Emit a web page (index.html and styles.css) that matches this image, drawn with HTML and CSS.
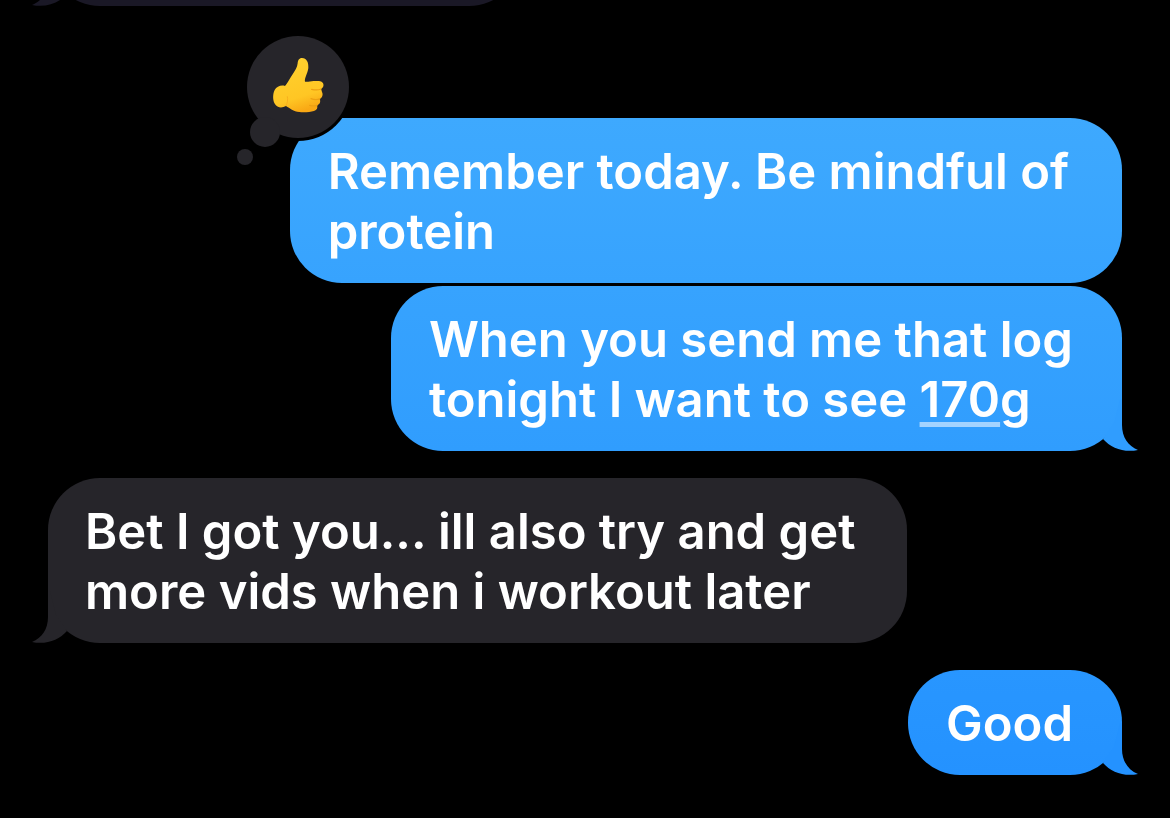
FILE: index.html
```html
<!DOCTYPE html>
<html lang="en">
<head>
<meta charset="utf-8">
<meta name="viewport" content="width=device-width, initial-scale=1">
<title>Messages</title>
<link rel="stylesheet" href="styles.css">
</head>
<body>
<main class="thread">
  <div class="bubble received earlier" aria-hidden="true">
    <svg class="tail" viewBox="0 0 46 52"><path d="M30 0V26C30 38 36 47 46 51C32 54 19 49 11 40L22 24L28 0Z"/></svg>
  </div>
  <div class="group sent-group">
    <div class="bubble sent first">
      <svg class="reaction" viewBox="0 0 120 132" role="img" aria-label="Thumbs up reaction">
        <defs>
          <linearGradient id="skin" x1="0.2" y1="0" x2="0.5" y2="1">
            <stop offset="0" stop-color="#ffd22f"/>
            <stop offset="0.75" stop-color="#ffc624"/>
            <stop offset="1" stop-color="#f9a814"/>
          </linearGradient>
        </defs>
        <circle class="halo" cx="62" cy="53" r="54"/>
        <g class="cloud">
          <circle cx="62" cy="53" r="51"/>
          <circle cx="29" cy="98" r="15"/>
          <circle cx="9" cy="123" r="8"/>
        </g>
        <g transform="translate(26 16) scale(.3333)">
          <path fill="url(#skin)" d="M120 24C111 24 108 31 107 40C106 52 99 62 91 74C84 85 77 98 69 108C58 104 44 109 38 120C31 134 32 155 41 165C48 174 61 174 72 168C84 175 94 185 112 186C127 188 144 186 156 183C165 180 168 174 165 166C173 163 177 156 173 147C181 143 184 134 180 126C179 122 178 119 177 117C184 113 187 104 182 98C177 92 168 93 158 93C147 92 138 97 129 95C127 85 137 70 139 54C140 37 134 24 120 24Z"/>
          <g fill="none" stroke="#eda012" stroke-width="4" stroke-linecap="round">
            <path d="M177 117C168 121 158 120 149 118"/>
            <path d="M173 147C165 150 155 149 147 146"/>
            <path d="M165 166C157 169 150 168 143 166"/>
          </g>
          <path d="M72 167C77 158 78 148 76 140" fill="none" stroke="#f7b01e" stroke-width="3" stroke-linecap="round"/>
        </g>
      </svg>
      <p class="text">Remember today. Be mindful of<br>protein</p>
    </div>
    <div class="bubble sent second">
      <p class="text">When you send me that log<br>tonight I want to see <a class="detected" href="#quantity">170</a>g</p>
      <svg class="tail" viewBox="0 0 46 52" aria-hidden="true"><path d="M30 0V26C30 38 36 47 46 51C32 54 19 49 11 40L22 24L28 0Z"/></svg>
    </div>
  </div>
  <div class="bubble received reply">
    <p class="text">Bet I got you... ill also try and get<br>more vids when i workout later</p>
    <svg class="tail" viewBox="0 0 46 52" aria-hidden="true"><path d="M30 0V26C30 38 36 47 46 51C32 54 19 49 11 40L22 24L28 0Z"/></svg>
  </div>
  <div class="bubble sent last">
    <p class="text">Good</p>
    <svg class="tail" viewBox="0 0 46 52" aria-hidden="true"><path d="M30 0V26C30 38 36 47 46 51C32 54 19 49 11 40L22 24L28 0Z"/></svg>
  </div>
</main>
</body>
</html>
```
FILE: styles.css
```css
* {
  box-sizing: border-box;
}

body {
  margin: 0;
  background: #000;
  color: #fff;
  font-family: Inter, "Liberation Sans", sans-serif;
}

.thread {
  display: flex;
  flex-direction: column;
  gap: 27px;
  min-height: 100vh;
  padding: 0 48px;
  overflow: hidden;
}

.group {
  display: flex;
  flex-direction: column;
  gap: 3px;
}

.bubble {
  position: relative;
  padding: 24px 49px 21px 38px;
  border-radius: 52px;
}

.sent {
  align-self: flex-end;
}

.received {
  align-self: flex-start;
  background: #26252a;
  color: #26252a;
}

.text {
  margin: 0;
  color: #fff;
  font-size: 49px;
  font-weight: 600;
  line-height: 60px;
}

.earlier {
  width: 44%;
  height: 105px;
  margin-top: -99px;
  background: #1a1826;
  color: #1a1826;
}

.sent-group {
  margin-top: 85px;
}

.first {
  min-width: 77.5%;
  background: linear-gradient(#3ea9fe, #37a3fe);
}

.second {
  background: linear-gradient(#37a3fe, #309dfe);
  color: #309dfe;
}

.reply {
  min-width: 80%;
  padding-left: 37px;
}

.last {
  background: linear-gradient(#2896ff, #2492ff);
  color: #2492ff;
}

.tail {
  position: absolute;
  right: -16px;
  bottom: 0;
  width: 46px;
  height: 52px;
  fill: currentColor;
}

.received .tail {
  right: auto;
  left: -16px;
  transform: scaleX(-1);
}

.reaction {
  position: absolute;
  top: -84px;
  left: -54px;
  width: 120px;
  height: 132px;
}

.halo {
  fill: #000;
}

.cloud {
  fill: #26252a;
}

.detected {
  color: inherit;
  text-decoration: underline;
  text-decoration-color: #a3d3ff;
  text-decoration-thickness: 5px;
  text-underline-offset: 5px;
  text-decoration-skip-ink: none;
}
```
